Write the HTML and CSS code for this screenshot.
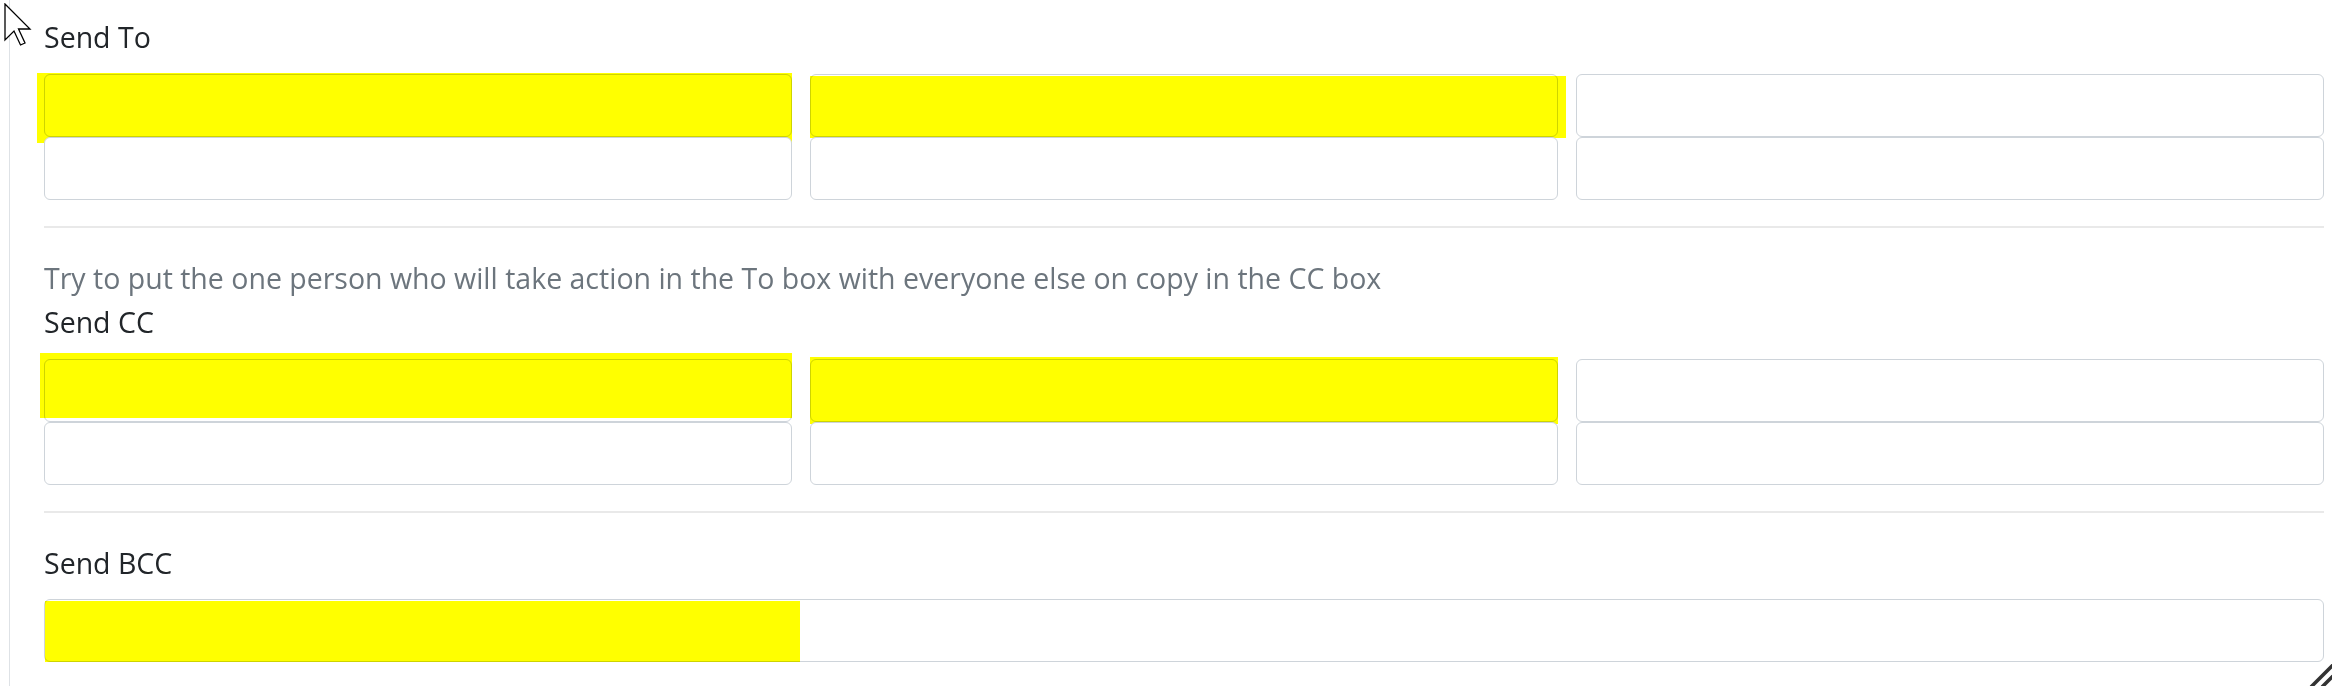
FILE: index.html
```html
<!DOCTYPE html>
<html lang="en">
<head>
<meta charset="utf-8">
<title>Recipients</title>
<link rel="stylesheet" href="styles.css">
</head>
<body>
<div class="page">
  <section class="group group-first">
    <label class="label">Send To</label>
    <div class="grid3">
      <div class="cell"><input class="field" type="text"><span class="mark mark-to1"></span></div>
      <div class="cell"><input class="field" type="text"><span class="mark mark-to2"></span></div>
      <div class="cell"><input class="field" type="text"></div>
      <div class="cell"><input class="field" type="text"></div>
      <div class="cell"><input class="field" type="text"></div>
      <div class="cell"><input class="field" type="text"></div>
    </div>
  </section>
  <hr class="divider">
  <section class="group">
    <p class="help">Try to put the one person who will take action in the To box with everyone else on copy in the CC box</p>
    <label class="label">Send CC</label>
    <div class="grid3">
      <div class="cell"><input class="field" type="text"><span class="mark mark-cc1"></span></div>
      <div class="cell"><input class="field" type="text"><span class="mark mark-cc2"></span></div>
      <div class="cell"><input class="field" type="text"></div>
      <div class="cell"><input class="field" type="text"></div>
      <div class="cell"><input class="field" type="text"></div>
      <div class="cell"><input class="field" type="text"></div>
    </div>
  </section>
  <hr class="divider">
  <section class="group">
    <label class="label label-bcc">Send BCC</label>
    <div class="cell"><input class="field" type="text"><span class="mark mark-bcc"></span></div>
  </section>
</div>
<svg class="cursor" width="30" height="46" viewBox="0 0 30 46" aria-hidden="true">
  <path d="M1 1 L1 37 L10 28 L16.5 42 L21 40 L14.5 26 L26 26 Z" fill="#fff" stroke="#000" stroke-width="1.3" stroke-linejoin="miter"/>
</svg>
<svg class="grip" width="24" height="22" viewBox="0 0 24 22" aria-hidden="true">
  <path d="M3 23 L25 1 M14 23 L25 12" stroke="#333" stroke-width="3.6" fill="none"/>
</svg>
</body>
</html>
```
FILE: styles.css
```css
html, body {
  margin: 0;
  padding: 0;
  background: #fff;
}
body {
  width: 2332px;
  height: 686px;
  overflow: hidden;
  position: relative;
  font-family: "Open Sans", "Noto Sans", sans-serif;
  color: #212529;
}
.page {
  margin-left: 9px;
  border-left: 1px solid #dee2e6;
  padding: 0 8px 0 34px;
  min-height: 686px;
  box-sizing: border-box;
}
.group-first {
  padding-top: 15px;
}
.label {
  display: block;
  font-size: 28.5px;
  line-height: 44px;
  margin-bottom: 15px;
  color: #212529;
}
.label-bcc {
  margin-bottom: 14px;
}
.help {
  margin: 0;
  font-size: 28.5px;
  line-height: 44px;
  color: #6c757d;
}
.grid3 {
  display: grid;
  grid-template-columns: repeat(3, 1fr);
  column-gap: 18px;
  row-gap: 0;
}
.cell {
  position: relative;
}
.field {
  display: block;
  box-sizing: border-box;
  width: 100%;
  height: 63px;
  margin: 0;
  padding: 0 18px;
  border: 1px solid #ced4da;
  border-radius: 6px;
  background: #fff;
  font: inherit;
  outline: none;
  -webkit-appearance: none;
  appearance: none;
}
.divider {
  border: 0;
  height: 2px;
  background: #e9e9e9;
  margin: 26px 0 28px;
}
.mark {
  position: absolute;
  background: #ffff00;
  mix-blend-mode: multiply;
  pointer-events: none;
}
.mark-to1 { left: -7px; top: -1px; width: 755px; height: 70px; }
.mark-to2 { left: 0; top: 2px; width: 756px; height: 62px; }
.mark-cc1 { left: -4px; top: -6px; width: 752px; height: 65px; }
.mark-cc2 { left: 0; top: -2px; width: 748px; height: 67px; }
.mark-bcc { left: 1px; top: 2px; width: 755px; height: 61px; }
.cursor {
  position: absolute;
  left: 4px;
  top: 3px;
}
.grip {
  position: absolute;
  right: 0;
  bottom: 0;
}
```
